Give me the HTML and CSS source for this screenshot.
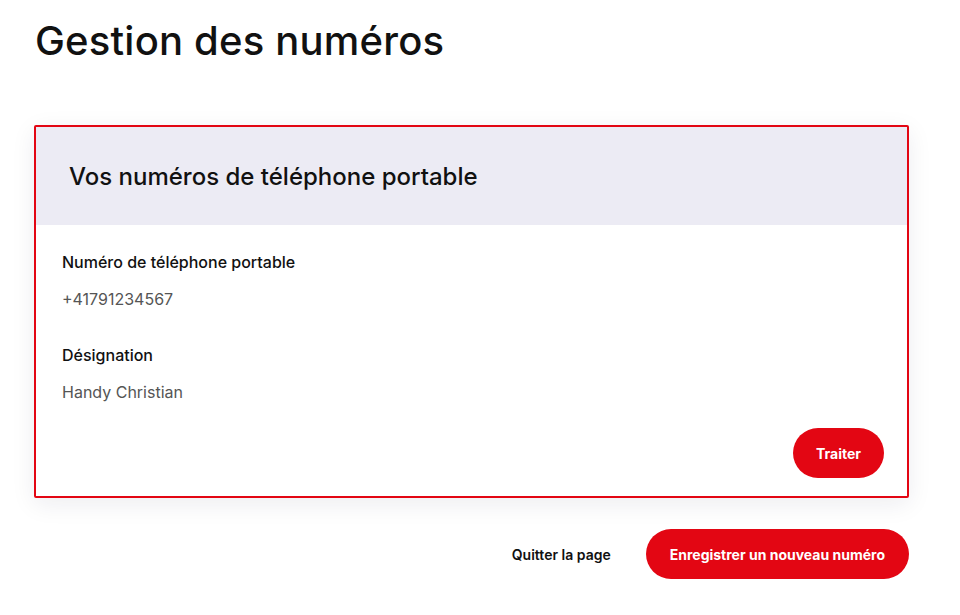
FILE: index.html
```html
<!DOCTYPE html>
<html lang="fr">
<head>
  <meta charset="UTF-8" />
  <meta name="viewport" content="width=device-width, initial-scale=1" />
  <title>Gestion des numéros</title>
  <link rel="stylesheet" href="styles.css">
</head>
<body>
  <div id="page">
    <h1>Gestion des numéros</h1>

    <div class="card">
      <div class="card-header">
        <h2>Vos numéros de téléphone portable</h2>
      </div>
      <div class="card-body">
        <div class="field">
          <div class="field-label">Numéro de téléphone portable</div>
          <div class="field-value">+41791234567</div>
        </div>
        <div class="field">
          <div class="field-label">Désignation</div>
          <div class="field-value">Handy Christian</div>
        </div>
        <div class="card-actions">
          <button class="button small">Traiter</button>
        </div>
      </div>
    </div>

    <div class="page-actions">
      <a class="link" href="#">Quitter la page</a>
      <button class="button">Enregistrer un nouveau numéro</button>
    </div>
  </div>
</body>
</html>
```

FILE: styles.css
```css
html, body {
  margin: 0;
  padding: 0;
  background: #fff;
  font-family: Inter, 'Noto Sans', sans-serif;
  color: #111;
}

#page {
  padding: 19px 51px 0 34px;
}

h1 {
  margin: 0 0 62px 1px;
  font-size: 40px;
  font-weight: 500;
  line-height: 44px;
  letter-spacing: 0.2px;
}

.card {
  border: 2px solid #e30613;
  border-radius: 2px;
  box-shadow: 0 6px 24px rgba(30, 30, 60, 0.08);
}

.card-header {
  background: #ecebf4;
  height: 98px;
  display: flex;
  align-items: center;
  padding-left: 33px;
}

.card-header h2 {
  margin: 0;
  font-size: 24px;
  font-weight: 500;
}

.card-body {
  padding: 26px 23px 18px 26px;
}

.field {
  margin-bottom: 34px;
}

.field-label {
  font-size: 16px;
  font-weight: 500;
  line-height: 22px;
  margin-bottom: 15px;
}

.field-value {
  font-size: 16px;
  line-height: 22px;
  color: #555;
}

.card-actions {
  display: flex;
  justify-content: flex-end;
  margin-top: -9px;
}

.button {
  height: 50px;
  padding: 0 24px;
  border: none;
  border-radius: 25px;
  background: #e30613;
  color: #fff;
  font-family: inherit;
  font-size: 14px;
  font-weight: 700;
  cursor: pointer;
}

.button.small {
  width: 91px;
  padding: 0;
}

.page-actions {
  display: flex;
  justify-content: flex-end;
  align-items: center;
  gap: 35px;
  margin-top: 31px;
}

.link {
  font-size: 14px;
  font-weight: 600;
  color: #111;
  text-decoration: none;
}
```
